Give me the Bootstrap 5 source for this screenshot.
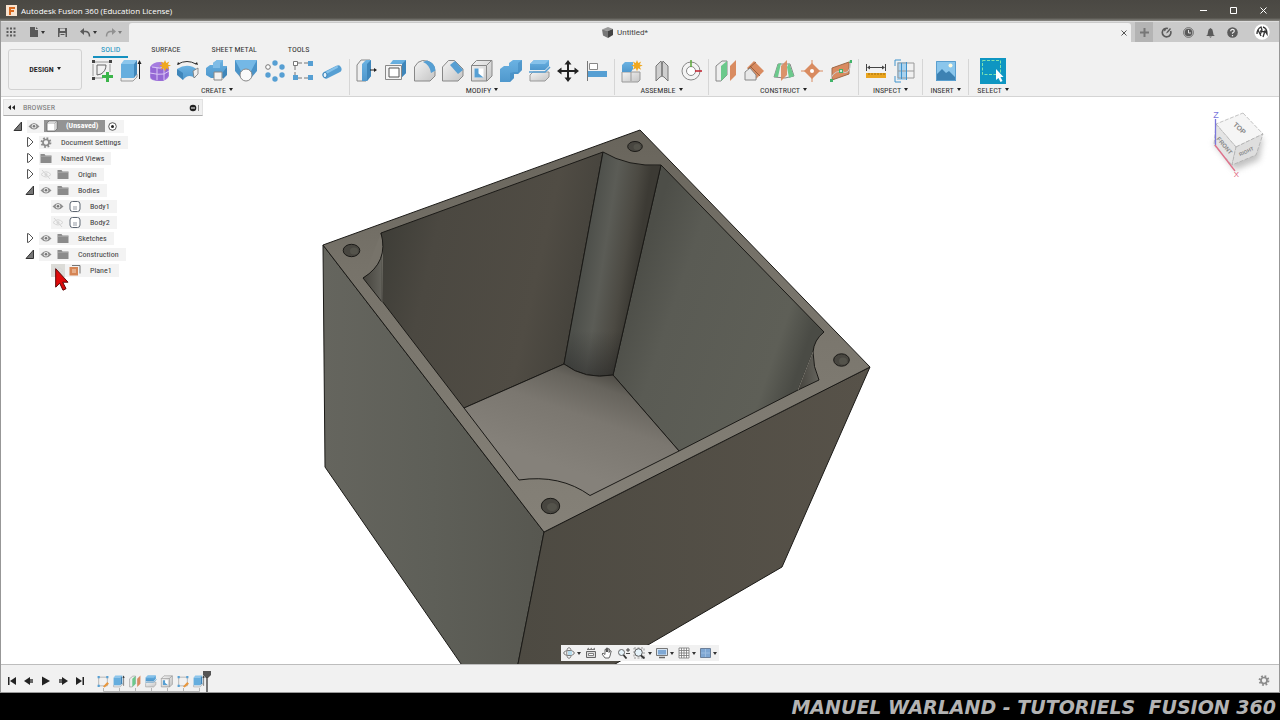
<!DOCTYPE html>
<html lang="en">
<head>
<meta charset="utf-8">
<meta name="viewport" content="width=device-width, initial-scale=1">
<title>Autodesk Fusion 360 (Education License)</title>
<link href="https://cdn.jsdelivr.net/npm/bootstrap@5.3.0/dist/css/bootstrap.min.css" rel="stylesheet">
<style>
  body { font-family: "Roboto Condensed", "Roboto", "Liberation Sans", sans-serif; font-size: 8px; line-height: 10px; color: #333; background: #fff; }
  svg { display: block; flex: none; }
  button { font: inherit; color: inherit; background: none; border: 0; padding: 0; }
  a { color: inherit; text-decoration: none; }
  .titlebar { height: 21px; padding: 0 2px 0 6px; background: linear-gradient(#4a4843, #504e48 85%, #8a8984); color: #fff; font: 8px/20px "Open Sans", sans-serif; }
  .winbtn { width: 30px; height: 20px; }
  .frame { border: solid #979797; border-width: 0 1px; }
  .appbar { height: 21px; background: #cacaca; border-top: 1px solid #dcdcdc; color: #5a5a5a; }
  .quick { width: 128px; }
  .quick button, .corner button { height: 20px; }
  .tight { gap: 2px; }
  .doctab { background: #f1f1f1; border-radius: 3px 3px 0 0; margin-top: 1px; font: 8px/10px "Roboto", sans-serif; color: #444; }
  .newtab { width: 18px; background: #b4b4b4; }
  .corner { width: 126px; }
  .corner button { width: 18px; }
  .ribbon { height: 55px; background: #f1f1f1; border-bottom: 1px solid #d4d4d4; }
  .workspace { width: 74px; height: 41px; margin: 7px 3px 0 7px; border: 1px solid #d2d2d2; border-radius: 3px; font-weight: 600; color: #222; }
  .tabs { gap: 15px; margin-bottom: 1px; }
  .tabs a { padding: 3px 8px 1px; border-bottom: 2px solid transparent; height: 16px; }
  .tabs a.on { color: #1590bf; border-color: #1590bf; }
  .tool { width: 24px; height: 24px; }
  .group { border-right: 1px solid #d6d6d6; padding: 0 5px; height: 36px; }
  .group:last-child { border: 0; }
  .w9 { width: 254px; } .w3 { width: 83px; } .w5 { width: 139px; } .w2 { width: 53px; }
  .ins { width: 46px; } .sel { width: 48px; }
  .menu { line-height: 15px; }
  .caret::after { content: ""; display: inline-block; border: solid transparent; border-width: 3px 2px 0; border-top-color: #222; margin-left: 3px; vertical-align: 2px; }
  .car { width: 0; height: 0; border: solid transparent; border-width: 3px 2px 0; border-top-color: #333; }
  .stage { min-height: 480px; overflow: hidden; }
  .model { width: 100%; height: 100%; }
  .browser { top: 2px; left: 2px; width: 200px; color: #3c3c3c; }
  .browser header { height: 17px; background: #f0f0f0; border: 1px solid #e2e2e2; border-bottom: 1px solid #adadad; color: #777; padding: 0 3px 0 4px; }
  .tree, .tree ul { list-style: none; margin: 0; padding: 0; }
  .tree { padding: 2px 0 0 9px; }
  .tree ul { padding-left: 12px; }
  .node { height: 16px; gap: 3px; }
  .arrow { width: 12px; height: 12px; }
  .chip { height: 13px; gap: 3px; padding-right: 7px; background: #f3f3f3; }
  .chip .name { margin-left: 5px; padding-top: 1px; }
  .rootname { height: 12px; background: #939393; color: #fff; font-weight: 700; gap: 8px; padding: 0 7px 0 0; }
  .slot { width: 14px; height: 13px; }
  .hot { background: #dcdcd8; }
  .pointer { top: 4px; left: 4px; }
  .cube { top: 8px; right: 8px; }
  .navbarx { bottom: 3px; left: 50%; transform: translateX(-50%); width: 158px; height: 16px; background: #f1f1f1; padding: 0 2px; }
  .timeline { height: 29px; background: #f1f1f1; border-top: 1px solid #bdbdbd; border-bottom: 1px solid #999; padding-top: 4px; }
  .play { gap: 5px; padding-left: 5px; margin-right: 9px; }
  .marker { margin-left: -4px; }
  .credit { height: 27px; background: #000; color: #b3b3b3; font: italic bold 19px/29px "DejaVu Sans", sans-serif; white-space: pre; padding-right: 4px; overflow: hidden; }
</style>
</head>
<body class="d-flex flex-column min-vh-100">

<svg width="0" height="0" class="position-absolute" aria-hidden="true">
  <defs>
    <linearGradient id="bl" x1="0" y1="0" x2="0" y2="1"><stop offset="0" stop-color="#6bb2e2"/><stop offset="1" stop-color="#4f98cd"/></linearGradient>
    <linearGradient id="gr" x1="0" y1="0" x2="1" y2="1"><stop offset="0" stop-color="#f4f4f4"/><stop offset="1" stop-color="#c4c4c4"/></linearGradient>
    <symbol id="sketch" viewBox="0 0 24 24"><path d="M3 5v12M5 3h14M20 5v8M5 19h8" stroke="#999" fill="none"/><path d="M2 1h3v3H2zM19 1h3v3h-3zM2 18h3v3H2z" fill="#444"/><path d="M7 6h9M7 6v10l4-1q5-3 5-9" fill="none" stroke="#666"/><path d="M16 13h3v3h4v3h-4v4h-3v-4h-4v-3h4z" fill="#3bb54a"/></symbol>
    <symbol id="extrude" viewBox="0 0 24 24"><path d="M2 19l4-4h12v3l-4 4H2z" fill="#ececec" stroke="#888" stroke-width=".8"/><path d="M2 5l3-4h13l-3 4z" fill="#8cc6ec"/><path d="M2 5h13v14H2z" fill="#66aede"/><path d="M15 5l3-4v14l-3 4z" fill="#3f86ba"/><path d="M20.500 20V4" stroke="#222"/><path d="M18.500 5l2-4 2 4z" fill="#222"/></symbol>
    <symbol id="form" viewBox="0 0 24 24"><path d="M2 8q3-5 10-5t9 6v8q-2 5-9 5-10 0-10-4z" fill="#a57ce0"/><path d="M3 8q9 3 12 2l5-2v9l-5 5q-9 0-12-3z" fill="#8f5fd0" opacity=".7"/><path d="M9 9v12M2 14q8 2 14 1l5-3M16 9v12M4 8q8 2 14 0" fill="none" stroke="#d9c6f5"/><path d="M17 1l1.300 3 3-1.500-1.500 3 3.200 1-3.200 1.300 1.500 3-3-1.500-1.300 3-1.300-3-3 1.500 1.500-3-3-1.300 3-1-1.500-3 3 1.500z" fill="#f0a81e"/></symbol>
    <symbol id="revolve" viewBox="0 0 24 24"><path d="M2 5q9-5 18 0" fill="none" stroke="#333"/><path d="M1 6l1-3 2 2zM22 6l-1-3-2 2z" fill="#222"/><path d="M1 10q11-7 21 1l-3 8q-7-5-12 2z" fill="url(#bl)"/><path d="M1 10l6 4v7l-6-5z" fill="#3f86ba"/><path d="M17 12l5-3v6l-4 4z" fill="#eee" stroke="#777" stroke-width=".8"/></symbol>
    <symbol id="sweep" viewBox="0 0 24 24"><path d="M1 9l4-3h3V4l4-3h6v6h4v8l-4 4H6l-5-3z" fill="url(#bl)"/><path d="M8 4l4-3h6l-3 3v5H8z" fill="#7fbce6"/><path d="M9 13h8v8H9z" fill="#f2f2f2" stroke="#888"/><path d="M18 13l4-5v8l-4 4z" fill="#3f86ba"/></symbol>
    <symbol id="loft" viewBox="0 0 24 24"><path d="M1 1h22v11l-6 7H7L1 12z" fill="#4a93c8"/><path d="M1 1h22L16 14H8z" fill="#74b8e6"/><circle cx="12" cy="16" r="6" fill="#fafafa" stroke="#888"/></symbol>
    <symbol id="patc" viewBox="0 0 24 24"><g fill="#569fd3"><circle cx="12" cy="4" r="2.700"/><circle cx="19" cy="8" r="2.700"/><circle cx="19" cy="16" r="2.700"/><circle cx="12" cy="20" r="2.700"/><circle cx="5" cy="16" r="2.700"/></g><circle cx="5" cy="8" r="2.300" fill="#fff" stroke="#777"/></symbol>
    <symbol id="patr" viewBox="0 0 24 24"><path d="M4 6v11M6 4h14M6 19h14" stroke="#777" stroke-dasharray="5 2" fill="none"/><path d="M2.500 2.500h4v4h-4z" fill="#fff" stroke="#777"/><path d="M17 2h5v5h-5zM2 16h5v5H2zM17 16h5v5h-5z" fill="#569fd3"/></symbol>
    <symbol id="pipe" viewBox="0 0 24 24"><path d="M6 16L18 10" stroke="#569fd3" stroke-width="7" stroke-linecap="round"/><path d="M6 14L17 8" stroke="#86c2ea" stroke-width="2" stroke-linecap="round"/><ellipse cx="5" cy="16" rx="2" ry="2.600" fill="#e8f3fb" stroke="#3f86ba"/></symbol>
    <symbol id="press" viewBox="0 0 24 24"><path d="M2 6l4-5h9v15l-4 6H2z" fill="#eee" stroke="#888"/><path d="M7 5l4-4h5v16l-4 5H7z" fill="url(#bl)"/><path d="M12 5l4-4v16l-4 5z" fill="#3f86ba"/><path d="M15 11h5" stroke="#222"/><path d="M19 9l3 2-3 2z" fill="#222"/></symbol>
    <symbol id="push" viewBox="0 0 24 24"><path d="M6 5l3-4h13v13l-4 4V5z" fill="url(#bl)"/><path d="M1.500 6.500h16v14h-16z" fill="#f4f4f4" stroke="#888"/><path d="M5 9h10v9H5z" fill="#fff" stroke="#555"/><path d="M18 5l4-4v13l-4 4z" fill="#3f86ba"/></symbol>
    <symbol id="fillet" viewBox="0 0 24 24"><path d="M1.500 8q3-6 8-6.500 12 0 12.500 11V17l-5 5H1.500z" fill="url(#gr)" stroke="#888"/><path d="M10 3l4-1.500q8 2 8.500 10L18 14Q17 6 10 3z" fill="#569fd3"/></symbol>
    <symbol id="chamfer" viewBox="0 0 24 24"><path d="M1.500 8l6-6.500h6L22 10v7l-5 5H1.500z" fill="url(#gr)" stroke="#888"/><path d="M9 6l5-4 8 9-5 4z" fill="#569fd3"/></symbol>
    <symbol id="shell" viewBox="0 0 24 24"><path d="M1.500 6.500l5-5H22V17l-5 5H1.500z" fill="url(#gr)" stroke="#888"/><path d="M1.500 6.500h15V22M16.500 6.500l5-5" fill="none" stroke="#888"/><path d="M4.500 9.500h9v9h-9z" fill="#fff"/><path d="M4.500 9.500v9h9l-5-4v-5z" fill="#569fd3"/></symbol>
    <symbol id="combine" viewBox="0 0 24 24"><path d="M1 10l4-3h5V4l4-3h9v10l-4 4h-4v4l-4 4H1z" fill="url(#bl)"/><path d="M19 4l4-3v10l-4 4h-4v4l-4 4v-9l4-1h4z" fill="#4189be" opacity=".55"/></symbol>
    <symbol id="split" viewBox="0 0 24 24"><path d="M2 16l3-3h16v5l-4 4H2z" fill="url(#gr)" stroke="#999"/><path d="M2 5l4-4h15v6l-4 4H2z" fill="url(#bl)"/><path d="M2 5l4-4h15l-4 4z" fill="#86c2ea"/><path d="M1 13h16l5-5" fill="none" stroke="#569fd3" stroke-width="1.500"/></symbol>
    <symbol id="move" viewBox="0 0 24 24"><path d="M12 4v16M4 12h16" stroke="#222" stroke-width="2"/><path d="M12 1l3.500 4.500h-7zM12 23l3.500-4.500h-7zM1 12l4.500-3.500v7zM23 12l-4.500-3.500v7z" fill="#222"/></symbol>
    <symbol id="align" viewBox="0 0 24 24"><path d="M2.500 2v20" stroke="#777"/><path d="M4.500 4.500h8v6h-8z" fill="#fff" stroke="#888"/><path d="M3 12h19v6H3z" fill="#569fd3"/></symbol>
    <symbol id="newcomp" viewBox="0 0 24 24"><path d="M2 13h18v8l-2 2H2z" fill="url(#gr)" stroke="#999"/><path d="M11 13v9" stroke="#999"/><path d="M2 6l3-3h8v7l-2 3H2z" fill="url(#bl)"/><path d="M17 1l1.200 3 3-1.500-1.500 3 3 1-3 1.300 1.500 3-3-1.500-1.200 3-1.200-3-3 1.500 1.500-3-3-1.300 3-1-1.500-3 3 1.500z" fill="#f0a81e"/></symbol>
    <symbol id="joint" viewBox="0 0 24 24"><path d="M6 7l5-5 1 4v11l-2 1-4 4zM18 7l-5-5-1 4v11l2 1 4 4z" fill="#cfcfcf" stroke="#777"/><path d="M12 5v12" stroke="#888" stroke-width="2"/></symbol>
    <symbol id="jorig" viewBox="0 0 24 24"><circle cx="12" cy="12" r="9" fill="#f4f4f4" stroke="#888"/><circle cx="12" cy="12" r="4.500" fill="#fff" stroke="#888"/><path d="M12 1v7" stroke="#5ba83a" stroke-width="1.500"/><path d="M16 12h7" stroke="#c2202e" stroke-width="1.500"/></symbol>
    <symbol id="offset" viewBox="0 0 24 24"><path d="M2 7l6-5h5v14l-6 6H2z" fill="#eee" stroke="#888"/><path d="M7 7l6-5v14l-6 6z" fill="#6cc98c"/><path d="M16 7l6-6v15l-6 6z" fill="#d98b60"/></symbol>
    <symbol id="angle" viewBox="0 0 24 24"><path d="M4 9l7-7 10 10-8 8z" fill="#d98b60"/><path d="M5 10l8-7M7 7l10 10" stroke="#8a5535" stroke-width=".8"/><path d="M2 13l5-4 6 7v5H2z" fill="#e8e8e8" stroke="#888"/></symbol>
    <symbol id="midp" viewBox="0 0 24 24"><path d="M2 18L6 5h12l4 12-9 2z" fill="#eee" stroke="#888"/><path d="M2 18L6 5l3-1-3 14zM17 4l5 13-5 2-2-11z" fill="#6cc98c"/><path d="M9 7l6-6v15l-6 6z" fill="#d98b60" opacity=".92"/></symbol>
    <symbol id="point" viewBox="0 0 24 24"><path d="M12 1v22M1 12h22" stroke="#d98b60"/><path d="M12 4l8 8-8 8-8-8z" fill="#d98b60"/><circle cx="12" cy="12" r="2" fill="#fff"/></symbol>
    <symbol id="plpath" viewBox="0 0 24 24"><path d="M3 9L20 3v12L3 21z" fill="#d98b60" stroke="#9d6a4a"/><path d="M2 22q0-9 10-10 9 6 10-10" fill="none" stroke="#ccc"/><path d="M21 1h2v3h-3zM10 10h4v4h-4zM1 20h3v3H1z" fill="#42b46a"/><circle cx="12" cy="12" r="1" fill="#fff"/></symbol>
    <symbol id="measure" viewBox="0 0 24 24"><path d="M2.500 5v7M21.500 5v7M4 8.500h16" stroke="#444"/><path d="M3 8.500l3-2v4zM21 8.500l-3-2v4z" fill="#444"/><path d="M2 14h20v5H2z" fill="#eaa51f"/><path d="M5 14v2M8 14v2M11 14v2M14 14v2M17 14v2M20 14v2" stroke="#a56f08"/></symbol>
    <symbol id="interf" viewBox="0 0 24 24"><path d="M4 3h10v18H4z" fill="#a9d2ee"/><path d="M5 4h16v15H5zM5 12h16" fill="none" stroke="#999"/><path d="M2 7V1h6M2 17v6h6" fill="none" stroke="#3f93cc"/><path d="M8.500 4v16M13.500 3v18" stroke="#3f93cc"/></symbol>
    <symbol id="picture" viewBox="0 0 24 24"><path d="M2 2h20v20H2z" fill="#8ac6ec"/><path d="M2 16l6-6 4 4 3-2 7 7v3H2z" fill="#3d82b3"/><path d="M2.500 2.500h19v19h-19z" fill="none" stroke="#5a9fcf"/><circle cx="16.500" cy="6.500" r="2" fill="#fffbe0"/></symbol>
    <symbol id="select" viewBox="0 0 26 26"><path d="M0 0h26v26H0z" fill="#0e96c2"/><path d="M2.500 2.500h18v14h-18z" fill="none" stroke="#7fe3b0" stroke-dasharray="3 1.500"/><path d="M16 11v11l2.500-2 2 4 2-1-2-4h3z" fill="#fff"/></symbol>
    <symbol id="skedit" viewBox="0 0 24 24"><path d="M4 4h16v16H4z" fill="none" stroke="#aaa" stroke-width="1.500"/><path d="M2 2h4v4H2zM18 2h4v4h-4zM2 18h4v4H2z" fill="#569fd3"/><path d="M12 21l8-8 3 3-8 7z" fill="#e8963c"/></symbol>
    <symbol id="eye" viewBox="0 0 14 13"><path d="M1.500 6.500Q7-.5 12.500 6.500 7 12.500 1.500 6.500z" fill="#8f8f8f"/><circle cx="7" cy="6.300" r="2.300" fill="#eee"/><circle cx="7" cy="6.300" r="1.300" fill="#777"/></symbol>
    <symbol id="eyeoff" viewBox="0 0 14 13"><path d="M2 6.500Q7 1 12 6.500 7 11.500 2 6.500zM3 2l8 9" fill="none" stroke="#d6d6d6"/><circle cx="7" cy="6.500" r="1.500" fill="#d6d6d6"/></symbol>
    <symbol id="folder" viewBox="0 0 14 13"><path d="M1.500 2h4l1 1.500h6V11h-11z" fill="#8b8b8b"/><path d="M1.500 4.300h11" stroke="#bbb" stroke-width=".6"/></symbol>
    <symbol id="gear" viewBox="0 0 14 13"><circle cx="7" cy="6.500" r="4.300" fill="none" stroke="#8b8b8b" stroke-width="2.200" stroke-dasharray="1.700 1.680"/><circle cx="7" cy="6.500" r="3" fill="none" stroke="#8b8b8b" stroke-width="1.700"/></symbol>
    <symbol id="bodyico" viewBox="0 0 14 13"><rect x="2" y="1.500" width="10" height="10" rx="2.500" fill="#fff" stroke="#5d6672"/><path d="M5 6h4v4H5z" fill="#c9ccd1"/></symbol>
    <symbol id="planeico" viewBox="0 0 14 13"><path d="M4 1.500h8v8" fill="none" stroke="#777"/><path d="M1.500 3h8.500v8.500H1.500z" fill="#d58555"/><path d="M4 5h4v4H4z" fill="#e6ae8a"/></symbol>
    <symbol id="open" viewBox="0 0 12 12"><path d="M9.500 2v8.500H2z" fill="#777" stroke="#333"/></symbol>
    <symbol id="shut" viewBox="0 0 12 12"><path d="M3.500 1.500v9L5 10l4-4-4-4z" fill="#fff" stroke="#555"/></symbol>
  </defs>
</svg>

<header class="titlebar d-flex align-items-center">
  <svg class="me-1" width="11" height="11" viewBox="0 0 11 11"><path d="M0 0h11v11H0z" fill="#f8e3cf"/><path d="M3 2h6v2H5v1h3v2H5v3H3z" fill="#d9691e"/></svg>
  <span class="flex-grow-1">Autodesk Fusion 360 (Education License)</span>
  <button class="winbtn" aria-label="Minimize"><svg class="mx-auto" width="7" height="7"><path d="M0 3.500h7" stroke="#fff"/></svg></button>
  <button class="winbtn" aria-label="Maximize"><svg class="mx-auto" width="7" height="7"><path d="M.5.500h6v6h-6z" fill="none" stroke="#fff"/></svg></button>
  <button class="winbtn" aria-label="Close"><svg class="mx-auto" width="7" height="7"><path d="M.5.500l6 6m0-6l-6 6" stroke="#fff"/></svg></button>
</header>

<div class="frame flex-grow-1 d-flex flex-column">
  <div class="appbar d-flex">
    <div class="quick d-flex align-items-center">
      <button class="ms-1" aria-label="Data panel"><svg width="12" height="12" viewBox="0 0 12 12"><path d="M1.500 1.500h2v2h-2zM5 1.500h2v2H5zM8.500 1.500h2v2h-2zM1.500 5h2v2h-2zM5 5h2v2H5zM8.500 5h2v2h-2zM1.500 8.500h2v2h-2zM5 8.500h2v2H5zM8.500 8.500h2v2h-2z" fill="#5a5a5a"/></svg></button>
      <button class="d-flex align-items-center ms-2 ps-1 tight" aria-label="File"><svg width="10" height="12" viewBox="0 0 10 12"><path d="M1 1h5v3h3v7H1z" fill="#5a5a5a"/><path d="M7 1l2 2H7z" fill="#5a5a5a"/></svg><span class="car"></span></button>
      <button class="ms-2 ps-1" aria-label="Save"><svg width="11" height="11" viewBox="0 0 11 11"><path d="M1 1h9v9H1z" fill="#5a5a5a"/><path d="M3 1.500h5V4H3zM2.500 6h6v4h-6z" fill="#ccc"/><path d="M3.500 7.500h4" stroke="#5a5a5a"/></svg></button>
      <button class="d-flex align-items-center ms-2 ps-1 tight" aria-label="Undo"><svg width="11" height="11" viewBox="0 0 11 11"><path d="M2 4.500h4q3.500.5 3.500 5" fill="none" stroke="#5a5a5a" stroke-width="1.500"/><path d="M0 4.500L4 1v7z" fill="#5a5a5a"/></svg><span class="car"></span></button>
      <button class="d-flex align-items-center ms-2 tight opacity-50" aria-label="Redo"><svg width="11" height="11" viewBox="0 0 11 11"><path d="M9 4.500H5Q1.500 5 1.500 9.500" fill="none" stroke="#5a5a5a" stroke-width="1.500"/><path d="M11 4.500L7 1v7z" fill="#5a5a5a"/></svg><span class="car"></span></button>
    </div>
    <div class="doctab flex-grow-1 d-flex align-items-center">
      <a href="#" class="flex-grow-1 d-flex align-items-center justify-content-center gap-1"><svg width="11" height="11" viewBox="0 0 11 11"><path d="M0 2.500L6 0l5 2-5 2z" fill="#999"/><path d="M0 2.500L6 4v7L1 8.500z" fill="#777"/><path d="M6 4l5-2v6l-5 3z" fill="#444"/></svg>Untitled*</a>
      <button class="me-1" aria-label="Close tab"><svg width="6" height="6"><path d="M.5.500l5 5m0-5l-5 5" stroke="#555"/></svg></button>
    </div>
    <button class="newtab ms-1" aria-label="New tab"><svg class="mx-auto" width="9" height="9"><path d="M4.500 0v9M0 4.500h9" stroke="#777" stroke-width="2"/></svg></button>
    <div class="corner d-flex align-items-center gap-1 ps-1">
      <button aria-label="Extensions"><svg class="mx-auto" width="11" height="11" viewBox="0 0 11 11"><path d="M7 1.500A4.300 4.300 0 1 0 9.600 4" fill="none" stroke="#5a5a5a" stroke-width="1.600"/><path d="M5 6.500l1-2L9 1l1 1-3 3.500zM2.500 1.500l3 1-2 2z" fill="#5a5a5a"/></svg></button>
      <button aria-label="Job status"><svg class="mx-auto" width="11" height="11" viewBox="0 0 11 11"><circle cx="5.500" cy="5.500" r="4.900" fill="none" stroke="#5a5a5a" stroke-width=".8"/><circle cx="5.500" cy="5.500" r="3.800" fill="#5a5a5a"/><path d="M5.500 3v3H8" stroke="#ddd" fill="none"/></svg></button>
      <button aria-label="Notifications"><svg class="mx-auto" width="11" height="11" viewBox="0 0 11 11"><path d="M1 9q2-1 2-4t2.500-4Q8 2 8 5t2 4zM4 9.500h3l-1.500 1.300z" fill="#5a5a5a"/></svg></button>
      <button aria-label="Help"><svg class="mx-auto" width="11" height="11" viewBox="0 0 11 11"><circle cx="5.500" cy="5.500" r="5.300" fill="#5a5a5a"/><path d="M3.700 4.300q0-2 1.800-2t1.800 1.700Q7.300 5 5.500 6v.8M5.500 8v1.300" stroke="#eee" stroke-width="1.200" fill="none"/></svg></button>
      <button class="ms-2" aria-label="Account"><svg class="mx-auto" width="16" height="16" viewBox="0 0 16 16"><circle cx="8" cy="8" r="7.700" fill="#fff"/><path d="M3 10q0-5 4-7l1 3-2 5M9 3q4 1 4 7l-2-3-2 6M6 7l5 1M4 6l3 6" fill="none" stroke="#333" stroke-width="1.300"/></svg></button>
    </div>
  </div>

  <div class="ribbon d-flex">
    <button class="workspace caret">DESIGN</button>
    <div>
      <nav class="tabs d-flex ps-1 ms-1"><a href="#" class="on" aria-current="page">SOLID</a><a href="#">SURFACE</a><a href="#">SHEET METAL</a><a href="#">TOOLS</a></nav>
      <div class="d-flex">
        <div class="group d-flex flex-column align-items-center">
          <div class="w9 d-flex justify-content-between">
            <button class="tool" aria-label="Create Sketch"><svg width="24" height="24"><use href="#sketch"/></svg></button>
            <button class="tool" aria-label="Extrude"><svg width="24" height="24"><use href="#extrude"/></svg></button>
            <button class="tool" aria-label="Create Form"><svg width="24" height="24"><use href="#form"/></svg></button>
            <button class="tool" aria-label="Revolve"><svg width="24" height="24"><use href="#revolve"/></svg></button>
            <button class="tool" aria-label="Sweep"><svg width="24" height="24"><use href="#sweep"/></svg></button>
            <button class="tool" aria-label="Loft"><svg width="24" height="24"><use href="#loft"/></svg></button>
            <button class="tool" aria-label="Circular Pattern"><svg width="24" height="24"><use href="#patc"/></svg></button>
            <button class="tool" aria-label="Rectangular Pattern"><svg width="24" height="24"><use href="#patr"/></svg></button>
            <button class="tool" aria-label="Pipe"><svg width="24" height="24"><use href="#pipe"/></svg></button>
          </div>
          <button class="menu caret">CREATE</button>
        </div>
        <div class="group d-flex flex-column align-items-center">
          <div class="w9 d-flex justify-content-between">
            <button class="tool" aria-label="Press Pull"><svg width="24" height="24"><use href="#press"/></svg></button>
            <button class="tool" aria-label="Offset Face"><svg width="24" height="24"><use href="#push"/></svg></button>
            <button class="tool" aria-label="Fillet"><svg width="24" height="24"><use href="#fillet"/></svg></button>
            <button class="tool" aria-label="Chamfer"><svg width="24" height="24"><use href="#chamfer"/></svg></button>
            <button class="tool" aria-label="Shell"><svg width="24" height="24"><use href="#shell"/></svg></button>
            <button class="tool" aria-label="Combine"><svg width="24" height="24"><use href="#combine"/></svg></button>
            <button class="tool" aria-label="Split Body"><svg width="24" height="24"><use href="#split"/></svg></button>
            <button class="tool" aria-label="Move"><svg width="24" height="24"><use href="#move"/></svg></button>
            <button class="tool" aria-label="Align"><svg width="24" height="24"><use href="#align"/></svg></button>
          </div>
          <button class="menu caret">MODIFY</button>
        </div>
        <div class="group d-flex flex-column align-items-center">
          <div class="w3 d-flex justify-content-between">
            <button class="tool" aria-label="New Component"><svg width="24" height="24"><use href="#newcomp"/></svg></button>
            <button class="tool" aria-label="Joint"><svg width="24" height="24"><use href="#joint"/></svg></button>
            <button class="tool" aria-label="Joint Origin"><svg width="24" height="24"><use href="#jorig"/></svg></button>
          </div>
          <button class="menu caret">ASSEMBLE</button>
        </div>
        <div class="group d-flex flex-column align-items-center">
          <div class="w5 d-flex justify-content-between">
            <button class="tool" aria-label="Offset Plane"><svg width="24" height="24"><use href="#offset"/></svg></button>
            <button class="tool" aria-label="Plane at Angle"><svg width="24" height="24"><use href="#angle"/></svg></button>
            <button class="tool" aria-label="Midplane"><svg width="24" height="24"><use href="#midp"/></svg></button>
            <button class="tool" aria-label="Point"><svg width="24" height="24"><use href="#point"/></svg></button>
            <button class="tool" aria-label="Plane Along Path"><svg width="24" height="24"><use href="#plpath"/></svg></button>
          </div>
          <button class="menu caret">CONSTRUCT</button>
        </div>
        <div class="group d-flex flex-column align-items-center">
          <div class="w2 d-flex justify-content-between">
            <button class="tool" aria-label="Measure"><svg width="24" height="24"><use href="#measure"/></svg></button>
            <button class="tool" aria-label="Interference"><svg width="24" height="24"><use href="#interf"/></svg></button>
          </div>
          <button class="menu caret">INSPECT</button>
        </div>
        <div class="group ins d-flex flex-column align-items-center">
          <button class="tool" aria-label="Insert Canvas"><svg width="24" height="24"><use href="#picture"/></svg></button>
          <button class="menu caret">INSERT</button>
        </div>
        <div class="group sel d-flex flex-column align-items-center">
          <button class="tool d-flex justify-content-center align-items-center" aria-label="Select"><svg width="26" height="26"><use href="#select"/></svg></button>
          <button class="menu caret">SELECT</button>
        </div>
      </div>
    </div>
  </div>

  <main class="stage flex-grow-1 position-relative">
    <svg class="model position-absolute" viewBox="1 97 1278 567" preserveAspectRatio="xMidYMid slice" role="img" aria-label="Open box with corner posts">
      <defs>
        <linearGradient id="rim" x1="0" y1="0" x2="0" y2="1"><stop offset="0" stop-color="#68645b"/><stop offset=".35" stop-color="#77736a"/><stop offset="1" stop-color="#858178"/></linearGradient>
        <linearGradient id="lf" x1="0" y1="0" x2="1" y2="0"><stop offset="0" stop-color="#65655e"/><stop offset=".5" stop-color="#5e5f58"/><stop offset="1" stop-color="#575750"/></linearGradient>
        <linearGradient id="rf" x1="0" y1="0" x2="1" y2="0"><stop offset="0" stop-color="#4d4a42"/><stop offset="1" stop-color="#575249"/></linearGradient>
        <linearGradient id="bw" gradientUnits="userSpaceOnUse" x1="382" y1="250" x2="600" y2="300"><stop offset="0" stop-color="#3f3e38"/><stop offset=".22" stop-color="#4b4841"/><stop offset=".7" stop-color="#504c44"/><stop offset="1" stop-color="#413f39"/></linearGradient>
        <linearGradient id="post" gradientUnits="userSpaceOnUse" x1="585" y1="260" x2="636" y2="268"><stop offset="0" stop-color="#4e504b"/><stop offset=".35" stop-color="#5b5c56"/><stop offset=".75" stop-color="#4c4a43"/><stop offset="1" stop-color="#3c3a34"/></linearGradient>
        <linearGradient id="rw" gradientUnits="userSpaceOnUse" x1="637" y1="270" x2="812" y2="330"><stop offset="0" stop-color="#4d4e48"/><stop offset=".25" stop-color="#5a5b54"/><stop offset=".85" stop-color="#5e5f57"/><stop offset="1" stop-color="#4a4b45"/></linearGradient>
        <linearGradient id="floor" gradientUnits="userSpaceOnUse" x1="606" y1="366" x2="570" y2="470"><stop offset="0" stop-color="#45433d"/><stop offset=".2" stop-color="#67645d"/><stop offset=".5" stop-color="#7b7770"/><stop offset="1" stop-color="#85817a"/></linearGradient>
        <linearGradient id="low" gradientUnits="userSpaceOnUse" x1="0" y1="150" x2="0" y2="376"><stop offset=".8" stop-color="#222" stop-opacity="0"/><stop offset="1" stop-color="#222" stop-opacity=".5"/></linearGradient>
        <linearGradient id="sp" x1="0" x2="1"><stop offset="0" stop-color="#45433d"/><stop offset="1" stop-color="#65645d"/></linearGradient>
      </defs>
      <g stroke="#1b1a17" stroke-linejoin="round">
        <path d="M323 245L544 532 516 674H468L325 467z" fill="url(#lf)"/>
        <path d="M544 532L870 367 782 567 598 674H516z" fill="url(#rf)"/>
        <path d="M323 245L640 130 870 367 544 532z" fill="url(#rim)"/>
        <path d="M381 233L603 152 564 364 464 408 382 301z" fill="url(#bw)"/>
        <path d="M661 165L824 332Q814 340 813 352L798 390 679 451 613 375z" fill="url(#rw)"/>
        <path d="M603 152Q628 167 661 165L613 375Q585 380 564 364z" fill="url(#post)"/>
        <path d="M603 152Q628 167 661 165L613 375Q585 380 564 364z" fill="url(#low)" stroke="none"/>
        <path d="M564 364Q585 380 613 375L679 451 590 495.500Q560 474 519 480L464 408z" fill="url(#floor)"/>
        <path d="M363 278Q382 266 382.500 244L382 302z" fill="url(#sp)"/>
        <path d="M813 352Q813 367 819 380L798 390z" fill="url(#sp)"/>
        <path d="M382 302L382.500 246M813 352l-15 38" stroke="#74726a" fill="none"/>
        <path d="M381 233Q389 262 363 278" fill="#77736a"/>
        <g fill="#484640"><ellipse cx="635" cy="146.500" rx="7.300" ry="5"/><ellipse cx="351.500" cy="250.500" rx="8.300" ry="6.200"/><ellipse cx="841.500" cy="360" rx="7.800" ry="6.200"/><ellipse cx="550.500" cy="506" rx="9.200" ry="7.700"/></g>
      </g>
      <g fill="#5e5b54" opacity=".6"><ellipse cx="637" cy="147" rx="3.500" ry="3"/><ellipse cx="354" cy="251" rx="4" ry="3.500"/><ellipse cx="843" cy="361" rx="4" ry="3.500"/><ellipse cx="552" cy="507" rx="5" ry="4"/></g>
    </svg>

    <aside class="browser position-absolute">
      <header class="d-flex align-items-center">
        <button aria-label="Collapse browser"><svg width="7" height="5"><path d="M3 0v5L0 2.500zM7 0v5L4 2.500z" fill="#222"/></svg></button>
        <span class="flex-grow-1 ps-1 ms-1">BROWSER</span>
        <button aria-label="Minimize browser"><svg width="14" height="8"><circle cx="8" cy="4" r="3.300" fill="#222"/><path d="M6 4h4" stroke="#fff"/><path d="M13.500 1v6" stroke="#888"/></svg></button>
      </header>
      <ul class="tree">
        <li>
          <div class="node d-flex align-items-center"><svg class="arrow"><use href="#open"/></svg><div class="chip d-flex align-items-center"><svg class="slot"><use href="#eye"/></svg><span class="rootname d-flex align-items-center"><svg width="14" height="12" viewBox="0 0 14 12"><path d="M3 3l2-2h8v8l-2 2H3z" fill="#fff" stroke="#666" stroke-width=".8"/><path d="M3 3h8v8M11 3l2-2" fill="none" stroke="#999" stroke-width=".8"/></svg>(Unsaved)</span><svg width="9" height="9" viewBox="0 0 9 9"><circle cx="4.500" cy="4.500" r="3.800" fill="#fff" stroke="#333" stroke-width=".8"/><circle cx="4.500" cy="4.500" r="1.500" fill="#222"/></svg></div></div>
          <ul>
            <li class="node d-flex align-items-center"><svg class="arrow"><use href="#shut"/></svg><div class="chip d-flex align-items-center"><svg class="slot"><use href="#gear"/></svg><span class="name">Document Settings</span></div></li>
            <li class="node d-flex align-items-center"><svg class="arrow"><use href="#shut"/></svg><div class="chip d-flex align-items-center"><svg class="slot"><use href="#folder"/></svg><span class="name">Named Views</span></div></li>
            <li class="node d-flex align-items-center"><svg class="arrow"><use href="#shut"/></svg><div class="chip d-flex align-items-center"><svg class="slot"><use href="#eyeoff"/></svg><svg class="slot"><use href="#folder"/></svg><span class="name">Origin</span></div></li>
            <li>
              <div class="node d-flex align-items-center"><svg class="arrow"><use href="#open"/></svg><div class="chip d-flex align-items-center"><svg class="slot"><use href="#eye"/></svg><svg class="slot"><use href="#folder"/></svg><span class="name">Bodies</span></div></div>
              <ul>
                <li class="node d-flex align-items-center"><span class="arrow"></span><div class="chip d-flex align-items-center"><svg class="slot"><use href="#eye"/></svg><svg class="slot"><use href="#bodyico"/></svg><span class="name">Body1</span></div></li>
                <li class="node d-flex align-items-center"><span class="arrow"></span><div class="chip d-flex align-items-center"><svg class="slot"><use href="#eyeoff"/></svg><svg class="slot"><use href="#bodyico"/></svg><span class="name">Body2</span></div></li>
              </ul>
            </li>
            <li class="node d-flex align-items-center"><svg class="arrow"><use href="#shut"/></svg><div class="chip d-flex align-items-center"><svg class="slot"><use href="#eye"/></svg><svg class="slot"><use href="#folder"/></svg><span class="name">Sketches</span></div></li>
            <li>
              <div class="node d-flex align-items-center"><svg class="arrow"><use href="#open"/></svg><div class="chip d-flex align-items-center"><svg class="slot"><use href="#eye"/></svg><svg class="slot"><use href="#folder"/></svg><span class="name">Construction</span></div></div>
              <ul>
                <li class="node d-flex align-items-center"><span class="arrow"></span><div class="chip d-flex align-items-center position-relative"><svg class="slot hot"><use href="#eyeoff"/></svg><svg class="slot"><use href="#planeico"/></svg><span class="name">Plane1</span><svg class="pointer position-absolute" width="15" height="23" viewBox="0 0 15 23"><path d="M.7.700v18.500l4-4 3.300 7 3-1.500-3.300-6.500h5.300z" fill="#e00a0a" stroke="#5a0808"/></svg></div></li>
              </ul>
            </li>
          </ul>
        </li>
      </ul>
    </aside>

    <svg class="cube position-absolute" width="66" height="80" viewBox="1205 105 66 80" role="img" aria-label="View cube">
      <defs><filter id="soft" x="-30%" y="-30%" width="160%" height="160%"><feGaussianBlur stdDeviation="3"/></filter></defs>
      <path d="M1213 142l22 28 24-10 4-22z" fill="#999" opacity=".6" filter="url(#soft)"/>
      <g stroke="#aaa" stroke-width=".7" stroke-dasharray="4 1.500"><path d="M1243 113l20 21-27 13-20-23z" fill="#f5f5f5"/><path d="M1216 124l20 23-4 18-18-20z" fill="#e4e4e4"/><path d="M1236 147l27-13-7 21-24 10z" fill="#dedede"/></g>
      <path d="M1215.500 119v26" stroke="#7a76dc" stroke-width="1.300"/><path d="M1215 145l20 26" stroke="#e0708a" stroke-width="1.300"/>
      <g font-family="Liberation Sans, sans-serif" text-anchor="middle" fill="#888" font-weight="700">
        <text x="1216" y="118" font-size="9" font-weight="400" fill="#7a76dc">Z</text><text x="1236.500" y="177" font-size="8" font-weight="400" fill="#e0607a">X</text>
        <text font-size="7" transform="translate(1238 130) rotate(42)">TOP</text><text font-size="6" transform="translate(1223 147) rotate(50)">FRONT</text><text font-size="5" transform="translate(1247 153) rotate(-24)">RIGHT</text>
      </g>
    </svg>

    <div class="navbarx position-absolute d-flex align-items-center justify-content-between">
      <button class="d-flex align-items-center tight" aria-label="Orbit"><svg width="12" height="12" viewBox="0 0 12 12"><ellipse cx="6" cy="6" rx="5.300" ry="2.500" fill="none" stroke="#777"/><ellipse cx="6" cy="6" rx="2.300" ry="5.300" fill="none" stroke="#888"/><path d="M5 4h4v4H5z" fill="#b8dced"/></svg><span class="car"></span></button>
      <button aria-label="Look at"><svg width="12" height="12" viewBox="0 0 12 12"><path d="M1.500 4.500h9v6h-9z" fill="#ddd" stroke="#666"/><path d="M3.500 6.500h5v2h-5z" fill="#fff" stroke="#666" stroke-width=".8"/><path d="M2 2.500l2-1.500M5 2.500L7 1M8 2.500L10 1M2 2.500h8" stroke="#777" fill="none"/></svg></button>
      <button aria-label="Pan"><svg width="12" height="12" viewBox="0 0 12 12"><path d="M4 11L1 7l1-1 2 1.500V2.500l1-.5.5 3V1h1v4l1-3.500 1 .5-.5 3.500L9.500 3.500l.7.500L9 9l-1 2z" fill="#fff" stroke="#444" stroke-width=".8"/></svg></button>
      <button aria-label="Zoom"><svg width="13" height="12" viewBox="0 0 13 12"><circle cx="4.500" cy="5.500" r="3" fill="#e6f3fa" stroke="#666"/><path d="M6.500 8l3 3.500" stroke="#333" stroke-width="1.800"/><path d="M9 3h4M11 1v4M9 6.500h4" stroke="#333" stroke-width=".9"/></svg></button>
      <button class="d-flex align-items-center tight" aria-label="Fit"><svg width="13" height="12" viewBox="0 0 13 12"><path d="M1 1h10v10H1z" fill="none" stroke="#999" stroke-dasharray="2 1.500"/><circle cx="5.500" cy="5.500" r="3.800" fill="#e6f3fa" stroke="#555"/><path d="M8 8.500l3.500 3" stroke="#333" stroke-width="1.800"/></svg><span class="car"></span></button>
      <button class="d-flex align-items-center tight" aria-label="Display settings"><svg width="12" height="12" viewBox="0 0 12 12"><path d="M.5 1.500h11v7H.5z" fill="#d5e4f3" stroke="#777"/><path d="M2 3h8v4.500H2z" fill="#7fa8d4"/><path d="M3 10.500h6" stroke="#666" stroke-width="1.500"/></svg><span class="car"></span></button>
      <button class="d-flex align-items-center tight" aria-label="Grid"><svg width="12" height="12" viewBox="0 0 12 12"><path d="M1 1h10v10H1zM3.500 1v10M6 1v10M8.500 1v10M1 3.500h10M1 6h10M1 8.500h10" fill="#fff" stroke="#777" stroke-width=".8"/></svg><span class="car"></span></button>
      <button class="d-flex align-items-center tight" aria-label="Viewports"><svg width="11" height="12" viewBox="0 0 11 12"><path d="M.5 1.500h10v9H.5z" fill="#7ea6d2" stroke="#6b7f99"/><path d="M5.500 2v8M1 6h9" stroke="#9bbce0"/></svg><span class="car"></span></button>
    </div>
  </main>

  <div class="timeline d-flex align-items-center">
    <div class="play d-flex align-items-center">
      <button aria-label="Go to start"><svg width="12" height="12"><path d="M2 2h1.500v8H2zM10 2v8L4 6z" fill="#222"/></svg></button>
      <button aria-label="Step back"><svg width="12" height="12"><path d="M7 2v8L1 6z" fill="#222"/><path d="M7 4h3v4H7z" fill="#666"/></svg></button>
      <button aria-label="Play"><svg width="12" height="12"><path d="M2 1.500v9L10 6z" fill="#222"/></svg></button>
      <button aria-label="Step forward"><svg width="12" height="12"><path d="M5 2v8l6-4z" fill="#222"/><path d="M2 4h3v4H2z" fill="#666"/></svg></button>
      <button aria-label="Go to end"><svg width="12" height="12"><path d="M8.500 2H10v8H8.500zM2 2v8l6-4z" fill="#222"/></svg></button>
    </div>
    <div class="align-self-end">
      <div class="d-flex">
        <button aria-label="Sketch1"><svg width="16" height="13"><use href="#skedit"/></svg></button>
        <button aria-label="Extrude1"><svg width="16" height="13"><use href="#extrude"/></svg></button>
        <button aria-label="Plane1"><svg width="16" height="13"><use href="#offset"/></svg></button>
        <button aria-label="Split1"><svg width="16" height="13"><use href="#split"/></svg></button>
        <button aria-label="Shell1"><svg width="16" height="13"><use href="#shell"/></svg></button>
        <button aria-label="Sketch2"><svg width="16" height="13"><use href="#skedit"/></svg></button>
        <button aria-label="Extrude2"><svg width="16" height="13"><use href="#extrude"/></svg></button>
      </div>
      <svg width="112" height="4"><path d="M8.500 0v3.500h96V0M24.500 0v3M40.500 0v3M56.500 0v3M72.500 0v3M88.500 0v3" fill="none" stroke="#b5b5b5"/></svg>
    </div>
    <svg class="marker align-self-end" width="8" height="21"><path d="M0 0h8v4L5 7H3L0 4z" fill="#555"/><path d="M4 6v15" stroke="#444" stroke-width="1.400"/></svg>
    <button class="ms-auto me-2" aria-label="Timeline settings"><svg width="14" height="13"><use href="#gear"/></svg></button>
  </div>
</div>

<footer class="credit text-end">MANUEL WARLAND - TUTORIELS  FUSION 360</footer>
<script src="https://cdn.jsdelivr.net/npm/bootstrap@5.3.0/dist/js/bootstrap.bundle.min.js"></script>
</body>
</html>
